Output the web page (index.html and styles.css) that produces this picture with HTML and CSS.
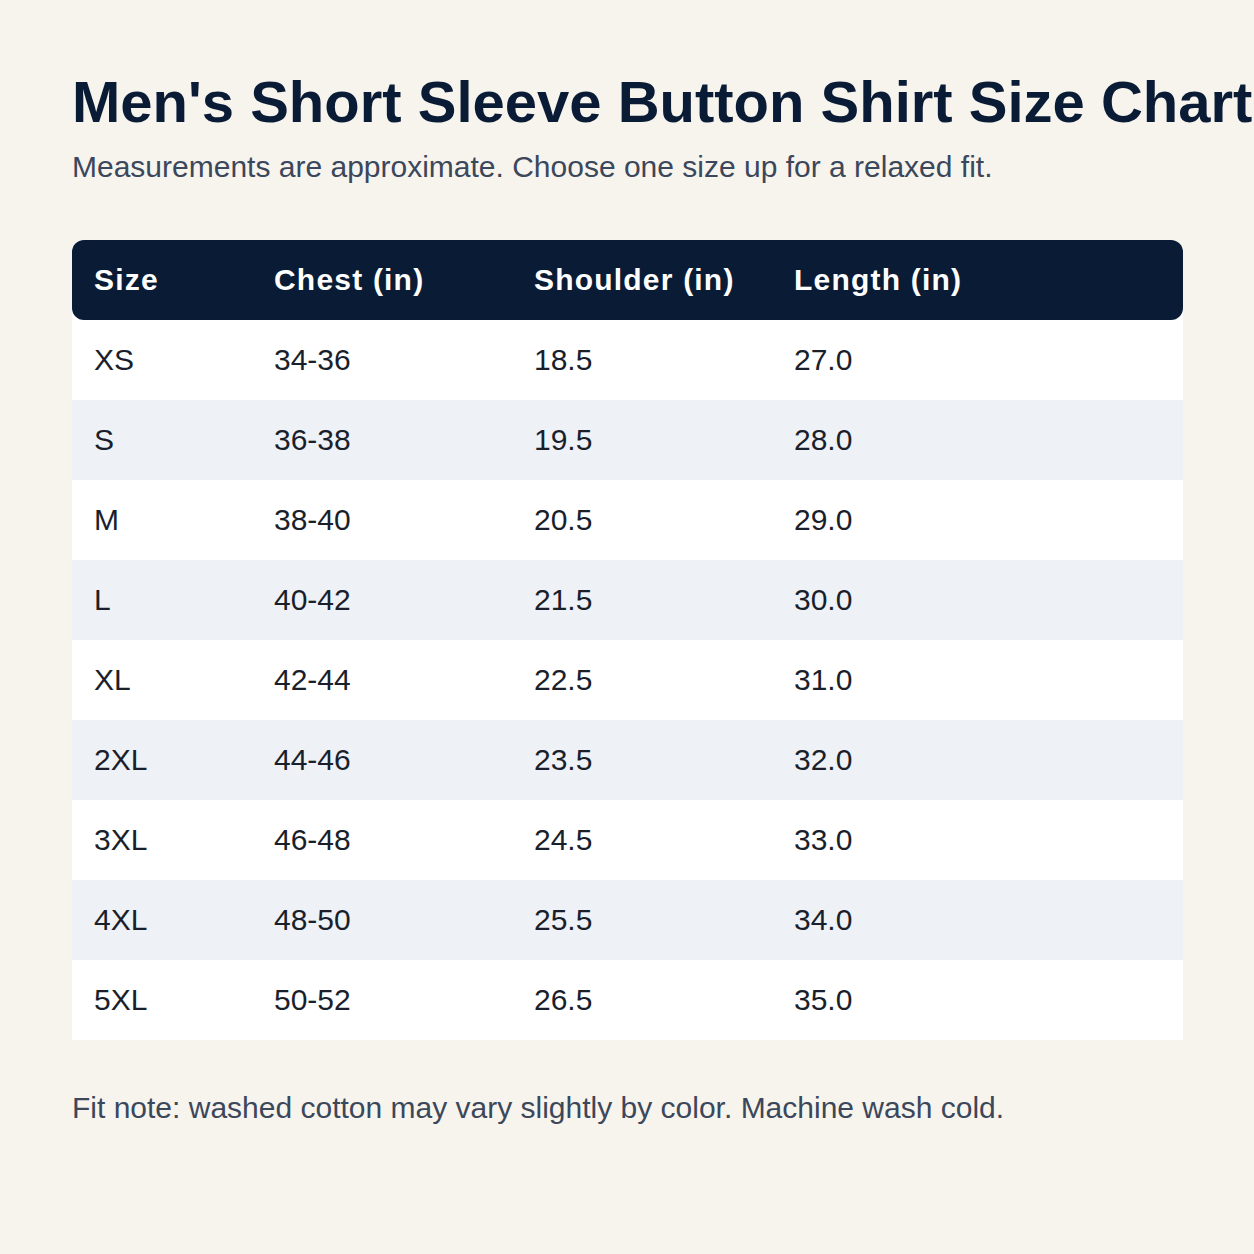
FILE: index.html
```html
<!DOCTYPE html>
<html lang="en">
<head>
<meta charset="utf-8">
<title>Men's Short Sleeve Button Shirt Size Chart</title>
<link rel="stylesheet" href="styles.css">
</head>
<body>
<main class="page">
  <h1 class="title">Men's Short Sleeve Button Shirt Size Chart</h1>
  <p class="subtitle">Measurements are approximate. Choose one size up for a relaxed fit.</p>
  <table class="chart">
    <thead>
      <tr><th>Size</th><th>Chest (in)</th><th>Shoulder (in)</th><th>Length (in)</th></tr>
    </thead>
    <tbody>
      <tr><td>XS</td><td>34-36</td><td>18.5</td><td>27.0</td></tr>
      <tr><td>S</td><td>36-38</td><td>19.5</td><td>28.0</td></tr>
      <tr><td>M</td><td>38-40</td><td>20.5</td><td>29.0</td></tr>
      <tr><td>L</td><td>40-42</td><td>21.5</td><td>30.0</td></tr>
      <tr><td>XL</td><td>42-44</td><td>22.5</td><td>31.0</td></tr>
      <tr><td>2XL</td><td>44-46</td><td>23.5</td><td>32.0</td></tr>
      <tr><td>3XL</td><td>46-48</td><td>24.5</td><td>33.0</td></tr>
      <tr><td>4XL</td><td>48-50</td><td>25.5</td><td>34.0</td></tr>
      <tr><td>5XL</td><td>50-52</td><td>26.5</td><td>35.0</td></tr>
    </tbody>
  </table>
  <p class="note">Fit note: washed cotton may vary slightly by color. Machine wash cold.</p>
</main>
</body>
</html>
```

FILE: styles.css
```css
html, body {
  margin: 0;
  padding: 0;
  background: #f7f4ee;
}
body {
  font-family: "Liberation Sans", Arial, sans-serif;
  width: 1254px;
  height: 1254px;
  overflow: hidden;
}
.page {
  padding: 70px 71px 0 72px;
}
.title {
  margin: 0;
  font-size: 58px;
  line-height: 64px;
  font-weight: 700;
  color: #0a1c35;
  white-space: nowrap;
}
.subtitle {
  margin: 15px 0 0;
  font-size: 30px;
  line-height: 36px;
  color: #3b475a;
}
.chart {
  margin-top: 55px;
  width: 1111px;
  border-collapse: separate;
  border-spacing: 0;
  background: #ffffff;
  border-radius: 12px 12px 0 0;
  table-layout: fixed;
}
.chart th,
.chart td {
  height: 80px;
  padding: 0 22px;
  text-align: left;
  font-size: 30px;
  box-sizing: border-box;
}
.chart th {
  background: #0a1c35;
  color: #ffffff;
  font-weight: 700;
  letter-spacing: 0.04em;
}
.chart th:first-child {
  border-radius: 12px 0 0 12px;
  width: 180px;
}
.chart th:nth-child(2),
.chart th:nth-child(3) {
  width: 260px;
}
.chart th:last-child {
  border-radius: 0 12px 12px 0;
}
.chart td {
  color: #1a1f2c;
}
.chart tbody tr:nth-child(even) td {
  background: #eef1f6;
}
.note {
  margin: 50px 0 0;
  font-size: 30px;
  line-height: 36px;
  color: #3b475a;
}
```
